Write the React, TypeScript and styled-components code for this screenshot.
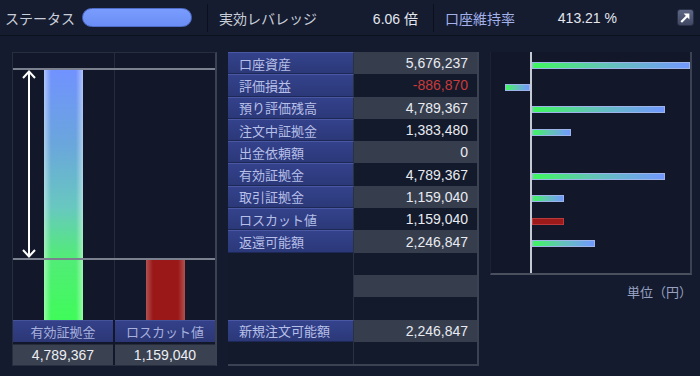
import React from 'react';
import styled, { createGlobalStyle } from 'styled-components';

const GlobalStyle = createGlobalStyle`
  html, body {
    margin: 0;
    padding: 0;
    background: #141b2e;
  }
  body {
    font-family: "Liberation Sans", "Noto Sans CJK JP", sans-serif;
  }
`;

const Screen = styled.div`
  width: 700px;
  height: 376px;
  background: #141b2e;
  overflow: hidden;
`;

const Header = styled.div`
  height: 35px;
  display: flex;
  align-items: center;
  background: #151c30;
  border-bottom: 1px solid #0c111e;
`;

const HeaderLabel = styled.span<{ $accent?: boolean; $width?: number }>`
  font-size: 14px;
  color: ${({ $accent }) => ($accent ? '#a3b1ea' : '#c9cdd8')};
  width: ${({ $width }) => ($width ? `${$width}px` : 'auto')};
  white-space: nowrap;
`;

const HeaderValue = styled.span<{ $width: number }>`
  font-size: 14px;
  color: #e4e7ee;
  width: ${({ $width }) => $width}px;
  text-align: right;
  white-space: nowrap;
`;

const StatusPill = styled.div`
  width: 110px;
  height: 19px;
  margin-left: 7px;
  border-radius: 10px;
  background: linear-gradient(to bottom, #7a9cff, #6a8ef4);
  border: 1px solid #4e6cc8;
  box-sizing: border-box;
`;

const Divider = styled.div`
  width: 1px;
  height: 28px;
  background: #0b101c;
  margin: 0 11px 0 15px;
`;

const PopButton = styled.div`
  margin-left: auto;
  margin-right: 6px;
  width: 17px;
  height: 17px;
  border-radius: 3px;
  background: linear-gradient(to bottom, #5d6684, #404863);
  border: 1px solid #2a3046;
  box-sizing: border-box;
  display: flex;
  align-items: center;
  justify-content: center;
`;

const Body = styled.div`
  display: flex;
  padding: 16px 0 0 12px;
  gap: 11px;
  align-items: flex-start;
`;

/* ---------- left: comparison chart ---------- */

const LeftPanel = styled.div`
  width: 205px;
  height: 314px;
  box-sizing: border-box;
  border: 1px solid #272e3e;
  border-right: 2px solid #3b4252;
  background: #121829;
  display: flex;
  flex-direction: column;
`;

const BarArea = styled.div`
  position: relative;
  flex: 1;
  display: grid;
  grid-template-columns: 1fr 1fr;
`;

const BarColumn = styled.div`
  display: flex;
  justify-content: center;
  align-items: flex-end;
  & + & {
    border-left: 1px solid #252c3c;
  }
`;

const VerticalBar = styled.div<{ $kind: 'good' | 'bad' }>`
  width: 39px;
  background: ${({ $kind }) =>
    $kind === 'good'
      ? `linear-gradient(to right, rgba(255,255,255,0.45), rgba(255,255,255,0) 18%, rgba(255,255,255,0) 82%, rgba(255,255,255,0.45)),
         linear-gradient(to bottom, #7192ff 0%, #6aa6dc 30%, #68c8c0 55%, #52ec78 75%, #3ffb5a 100%)`
      : `linear-gradient(to right, rgba(255,255,255,0.25), rgba(255,255,255,0) 18%, rgba(255,255,255,0) 82%, rgba(255,255,255,0.25)),
         #9a1818`};
`;

const LevelLine = styled.div`
  position: absolute;
  left: 0;
  right: 0;
  height: 2px;
  background: #7b818e;
`;

const RangeArrow = styled.svg`
  position: absolute;
  left: 8px;
`;

const FooterRow = styled.div`
  display: grid;
  grid-template-columns: 1fr 1fr;
  gap: 2px;
`;

const FooterLabel = styled.div`
  height: 22px;
  display: flex;
  align-items: center;
  justify-content: center;
  font-size: 13px;
  color: #a7b0de;
  background: linear-gradient(to bottom, #34418a, #2b3775);
  border-top: 1px solid #45539a;
  box-sizing: border-box;
`;

const FooterValue = styled.div`
  height: 21px;
  display: flex;
  align-items: center;
  justify-content: center;
  font-size: 14px;
  color: #eceef3;
  background: #3a4151;
  border-top: 1px solid #262c3a;
  box-sizing: border-box;
`;

/* ---------- middle: table ---------- */

const Table = styled.div`
  width: 251px;
  box-sizing: border-box;
  display: grid;
  grid-template-columns: 126px 1fr;
  grid-auto-rows: 22.3px;
  border-right: 2px solid #3b4252;
  border-bottom: 2px solid #3b4252;
  background: #131a2b;
`;

const LabelCell = styled.div<{ $empty?: boolean }>`
  display: flex;
  align-items: center;
  padding-left: 11px;
  font-size: 13px;
  color: #b6bfe8;
  border-right: 1px solid #2a3142;
  box-sizing: border-box;
  ${({ $empty }) =>
    $empty
      ? 'background: #131a2b;'
      : `background: linear-gradient(to bottom, #34428c, #2b3878);
         border-top: 1px solid #4a58a4;
         border-bottom: 1px solid #1e2856;`}
`;

const ValueCell = styled.div<{ $shade: boolean; $negative?: boolean }>`
  display: flex;
  align-items: center;
  justify-content: flex-end;
  padding-right: 9px;
  font-size: 14px;
  color: ${({ $negative }) => ($negative ? '#c93a3a' : '#e9ebf1')};
  background: ${({ $shade }) => ($shade ? '#363e4e' : '#131a2b')};
`;

/* ---------- right: horizontal bars ---------- */

const RightColumn = styled.div`
  display: flex;
  flex-direction: column;
`;

const HChart = styled.div`
  width: 202px;
  height: 223px;
  box-sizing: border-box;
  display: flex;
  background: #121829;
  border-left: 1px solid #1c2233;
  border-right: 2px solid #3b4252;
  border-bottom: 2px solid #4a505e;
`;

const NegSide = styled.div`
  width: 40px;
  padding-top: 2px;
`;

const PosSide = styled.div`
  flex: 1;
  padding-top: 2px;
  border-left: 2px solid #c3cad3;
`;

const HRow = styled.div<{ $align: 'start' | 'end' }>`
  height: 22.3px;
  display: flex;
  align-items: center;
  justify-content: ${({ $align }) => ($align === 'end' ? 'flex-end' : 'flex-start')};
`;

const HBar = styled.div<{ $kind: 'good' | 'bad' }>`
  height: 7px;
  box-sizing: border-box;
  border: 1px solid ${({ $kind }) => ($kind === 'good' ? '#9cb4e8' : '#b83a3a')};
  background: ${({ $kind }) =>
    $kind === 'good' ? 'linear-gradient(to right, #3ff85e, #62c6b4 45%, #7298ff)' : '#9c1a1a'};
`;

const UnitLabel = styled.div`
  margin-top: 7px;
  text-align: right;
  font-size: 13px;
  color: #98a1c2;
`;

type Row = { label?: string; value?: number; kind?: 'good' | 'bad'; chart?: boolean };

const rows: Row[] = [
  { label: '口座資産', value: 5676237, chart: true },
  { label: '評価損益', value: -886870, chart: true },
  { label: '預り評価残高', value: 4789367, chart: true },
  { label: '注文中証拠金', value: 1383480, chart: true },
  { label: '出金依頼額', value: 0, chart: true },
  { label: '有効証拠金', value: 4789367, chart: true },
  { label: '取引証拠金', value: 1159040, chart: true },
  { label: 'ロスカット値', value: 1159040, kind: 'bad', chart: true },
  { label: '返還可能額', value: 2246847, chart: true },
  {},
  {},
  {},
  { label: '新規注文可能額', value: 2246847 },
  {},
];

const fmt = (n: number) => n.toLocaleString('en-US');

const MAX = 5676237;
const POS_WIDTH = 158;
const barWidth = (n: number) => Math.round((Math.abs(n) / MAX) * POS_WIDTH);

const EFFECTIVE = 4789367;
const LOSSCUT = 1159040;
const BAR_MAX_H = 251;

export default function App() {
  const chartRows = rows.filter((r) => r.chart);
  const lossH = Math.round((LOSSCUT / EFFECTIVE) * BAR_MAX_H);
  const span = BAR_MAX_H - lossH;

  return (
    <Screen>
      <GlobalStyle />
      <Header>
        <HeaderLabel style={{ paddingLeft: 5 }}>ステータス</HeaderLabel>
        <StatusPill />
        <Divider />
        <HeaderLabel $width={110}>実効レバレッジ</HeaderLabel>
        <HeaderValue $width={89}>6.06 倍</HeaderValue>
        <Divider />
        <HeaderLabel $accent $width={92}>口座維持率</HeaderLabel>
        <HeaderValue $width={80}>413.21 %</HeaderValue>
        <PopButton>
          <svg width="11" height="11" viewBox="0 0 11 11">
            <path d="M2 9.2 L7.2 4" stroke="#fff" strokeWidth="2.2" strokeLinecap="square" />
            <path d="M3.6 1.6 H9.4 V7.4 Z" fill="#fff" />
          </svg>
        </PopButton>
      </Header>

      <Body>
        <LeftPanel>
          <BarArea>
            <BarColumn>
              <VerticalBar $kind="good" style={{ height: BAR_MAX_H }} />
            </BarColumn>
            <BarColumn>
              <VerticalBar $kind="bad" style={{ height: lossH }} />
            </BarColumn>
            <LevelLine style={{ bottom: BAR_MAX_H - 1 }} />
            <LevelLine style={{ bottom: lossH - 1 }} />
            <RangeArrow width="16" height={span} style={{ bottom: lossH }} viewBox={`0 0 16 ${span}`}>
              <line x1="8" y1="2" x2="8" y2={span - 2} stroke="#fff" strokeWidth="2" />
              <path d="M2 9 L8 2.5 L14 9" fill="none" stroke="#fff" strokeWidth="2" />
              <path
                d={`M2 ${span - 9} L8 ${span - 2.5} L14 ${span - 9}`}
                fill="none"
                stroke="#fff"
                strokeWidth="2"
              />
            </RangeArrow>
          </BarArea>
          <FooterRow>
            <FooterLabel>有効証拠金</FooterLabel>
            <FooterLabel>ロスカット値</FooterLabel>
            <FooterValue>{fmt(EFFECTIVE)}</FooterValue>
            <FooterValue>{fmt(LOSSCUT)}</FooterValue>
          </FooterRow>
        </LeftPanel>

        <Table>
          {rows.map((r, i) => (
            <React.Fragment key={i}>
              <LabelCell $empty={!r.label}>{r.label}</LabelCell>
              <ValueCell $shade={i % 2 === 0} $negative={(r.value ?? 0) < 0}>
                {r.value !== undefined ? fmt(r.value) : ''}
              </ValueCell>
            </React.Fragment>
          ))}
        </Table>

        <RightColumn>
          <HChart>
            <NegSide>
              {chartRows.map((r, i) => (
                <HRow key={i} $align="end">
                  {r.value! < 0 && <HBar $kind="good" style={{ width: barWidth(r.value!) }} />}
                </HRow>
              ))}
            </NegSide>
            <PosSide>
              {chartRows.map((r, i) => (
                <HRow key={i} $align="start">
                  {r.value! > 0 && (
                    <HBar $kind={r.kind ?? 'good'} style={{ width: barWidth(r.value!) }} />
                  )}
                </HRow>
              ))}
            </PosSide>
          </HChart>
          <UnitLabel>単位（円）</UnitLabel>
        </RightColumn>
      </Body>
    </Screen>
  );
}
